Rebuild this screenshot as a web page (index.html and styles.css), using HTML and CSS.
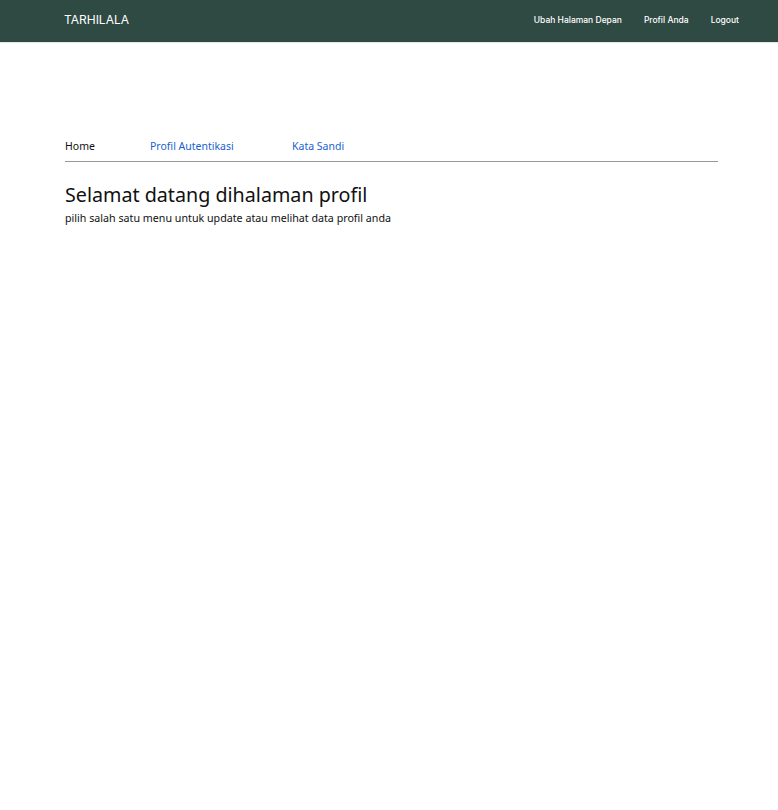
FILE: index.html
```html
<!DOCTYPE html>
<html>
<head>
<meta charset="utf-8">
<link rel="stylesheet" href="styles.css">
</head>
<body>
<header class="navbar">
  <div class="brand">TARHILALA</div>
  <nav class="nav-links">
    <a href="#">Ubah Halaman Depan</a>
    <a href="#">Profil Anda</a>
    <a href="#">Logout</a>
  </nav>
</header>
<main class="content">
  <div class="tabs">
    <a class="tab active" href="#">Home</a>
    <a class="tab" href="#">Profil Autentikasi</a>
    <a class="tab" href="#">Kata Sandi</a>
  </div>
  <h1 class="title">Selamat datang dihalaman profil</h1>
  <p class="subtitle">pilih salah satu menu untuk update atau melihat data profil anda</p>
</main>
</body>
</html>
```
FILE: styles.css
```css
html, body {
  margin: 0;
  padding: 0;
  background: #fff;
}
body {
  font-family: "Noto Sans", sans-serif;
}
.navbar {
  height: 43px;
  background: #2f4a43;
  border-bottom: 1px solid #dfe8e6;
  display: flex;
  align-items: center;
  justify-content: space-between;
  padding: 0 39px 3px 64px;
  box-sizing: border-box;
}
.brand {
  font-family: "Inter", sans-serif;
  color: #fff;
  font-size: 12px;
}
.nav-links {
  display: flex;
  gap: 22px;
}
.nav-links a {
  font-family: "Inter", sans-serif;
  color: #fff;
  font-size: 8.5px;
  font-weight: 500;
  text-decoration: none;
}
.content {
  padding: 96px 60px 0 65px;
}
.tabs {
  display: flex;
  border-bottom: 1px solid #999;
  padding-bottom: 8px;
}
.tab {
  font-size: 10.5px;
  color: #1a5fd0;
  text-decoration: none;
}
.tab.active {
  color: #111;
  width: 85px;
}
.tab:nth-child(2) {
  width: 142px;
}
.title {
  font-weight: 400;
  font-size: 19.7px;
  margin: 19px 0 0;
  color: #111;
}
.subtitle {
  font-size: 10.7px;
  margin: 3px 0 0;
  color: #111;
}
```
